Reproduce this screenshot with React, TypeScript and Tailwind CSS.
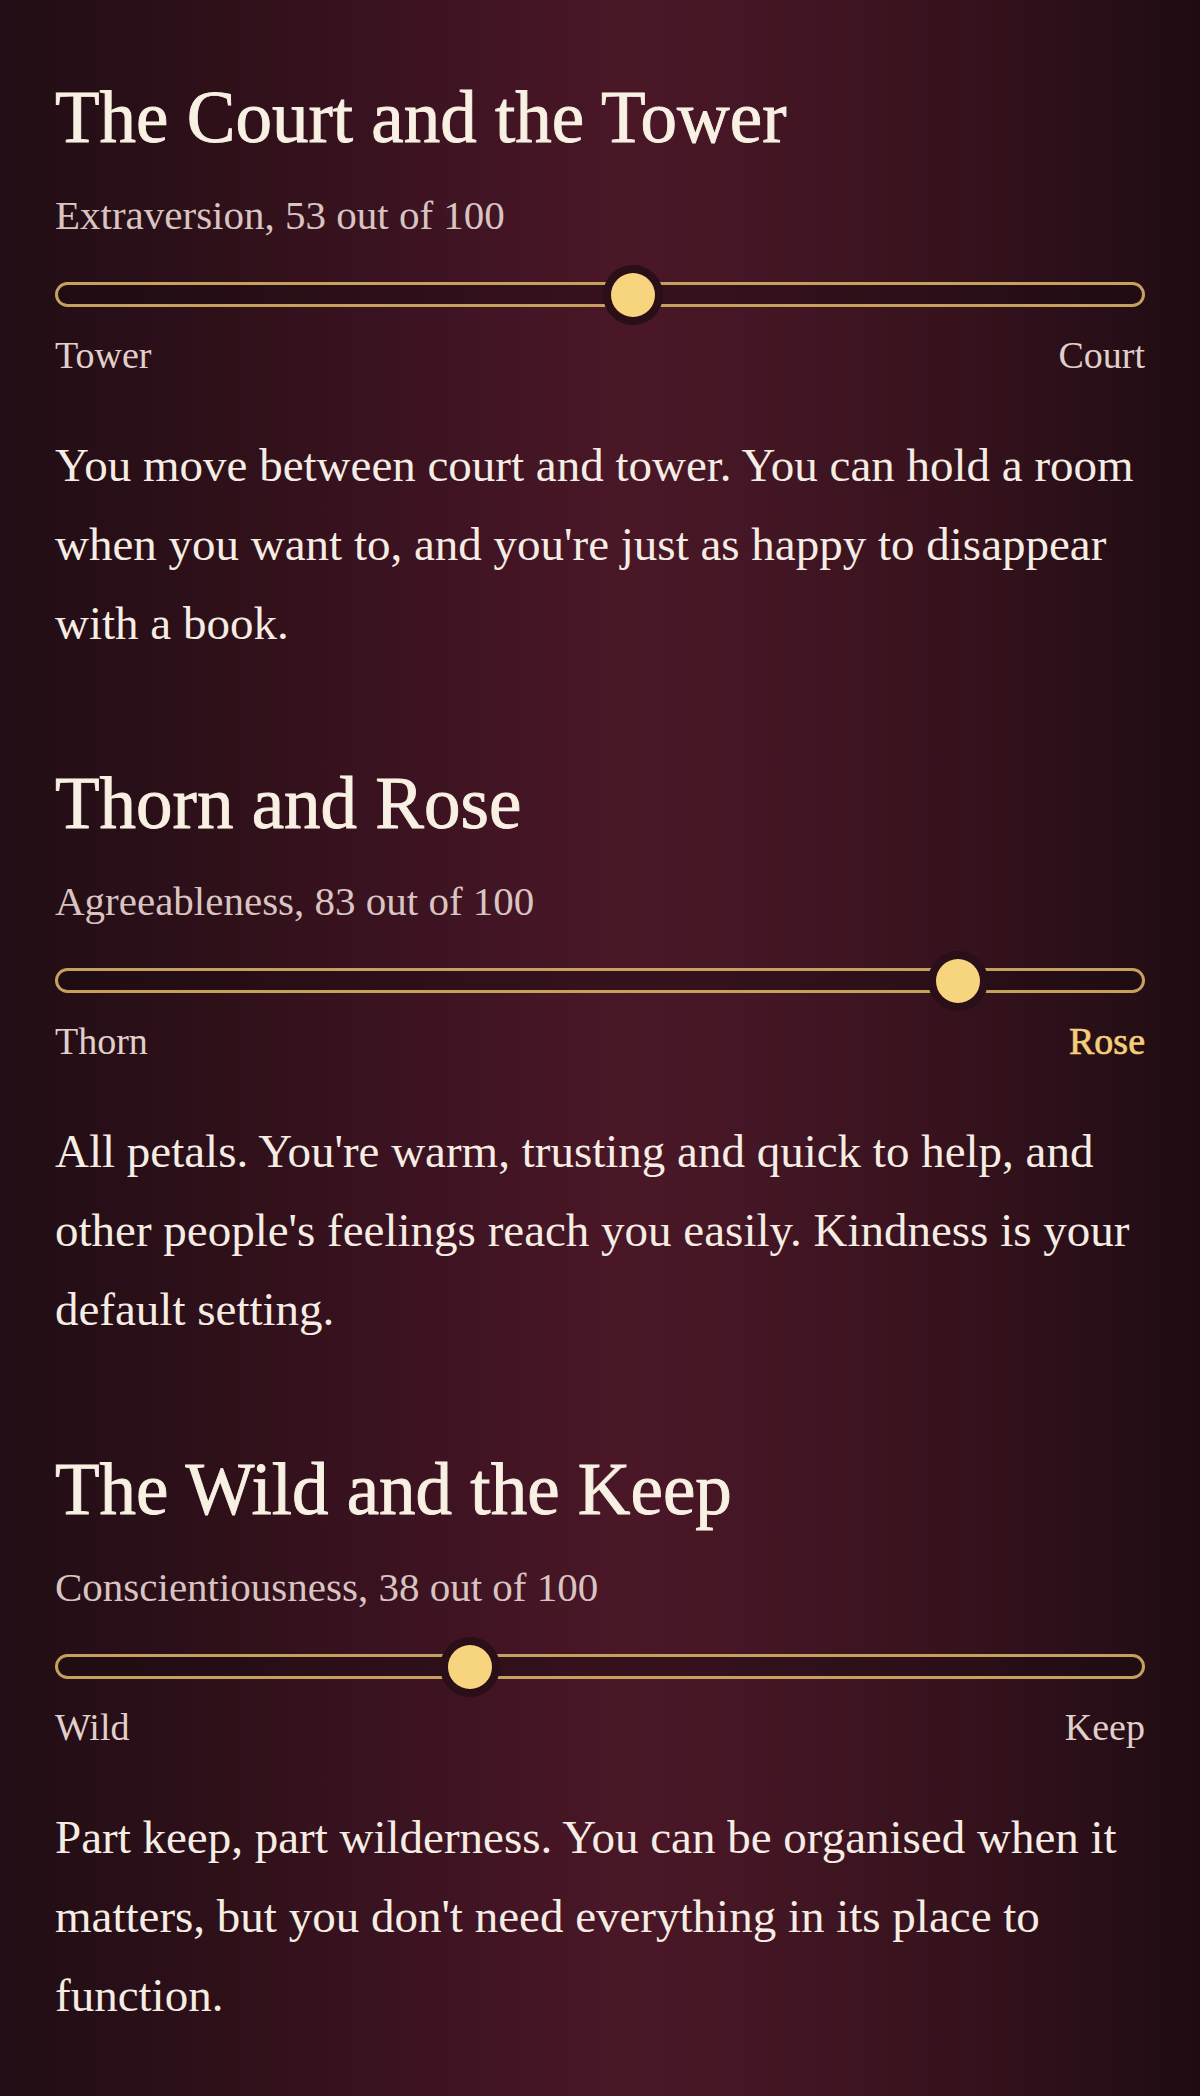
const traits = [
  {
    title: 'The Court and the Tower',
    trait: 'Extraversion',
    score: 53,
    low: 'Tower',
    high: 'Court',
    text: "You move between court and tower. You can hold a room when you want to, and you're just as happy to disappear with a book.",
  },
  {
    title: 'Thorn and Rose',
    trait: 'Agreeableness',
    score: 83,
    low: 'Thorn',
    high: 'Rose',
    text: "All petals. You're warm, trusting and quick to help, and other people's feelings reach you easily. Kindness is your default setting.",
  },
  {
    title: 'The Wild and the Keep',
    trait: 'Conscientiousness',
    score: 38,
    low: 'Wild',
    high: 'Keep',
    text: "Part keep, part wilderness. You can be organised when it matters, but you don't need everything in its place to function.",
  },
]

function Pole({ label, active }: { label: string; active: boolean }) {
  return (
    <span
      className={
        active
          ? 'text-[#f2cf78] [-webkit-text-stroke:0.7px_#f2cf78]'
          : 'text-[#e2cfca]'
      }
    >
      {label}
    </span>
  )
}

export default function App() {
  return (
    <main
      className="min-h-[2096px] w-full px-[55px] pt-[75px] pb-[56px] bg-[linear-gradient(90deg,#210d15_0%,#2e1019_18%,#3d1321_35%,#4a1727_52%,#451625_62%,#36121d_80%,#1f0c13_100%)]"
      style={{ fontFamily: '"Liberation Serif", "Times New Roman", serif' }}
    >
      <div className="flex flex-col gap-[98px]">
        {traits.map(t => (
          <section key={t.title} className="flex flex-col">
            <h2 className="text-[73px] leading-[86px] text-[#f8f0e3] [-webkit-text-stroke:0.9px_#f8f0e3]">
              {t.title}
            </h2>
            <p className="mt-[24px] text-[41px] leading-[60px] text-[#d9c4c1]">
              {t.trait}, {t.score} out of 100
            </p>

            <div className="relative mt-[37px] h-[25px] rounded-full border-[3px] border-[#c6a15e] bg-[#1a0910]/40">
              <div
                className="absolute top-1/2 h-[44px] w-[44px] -translate-x-1/2 -translate-y-1/2 rounded-full bg-[#f6d57e] shadow-[0_0_0_8px_#2a0e18]"
                style={{ left: `${t.score}%` }}
              />
            </div>

            <div className="mt-[20px] flex justify-between text-[38px] leading-[57px]">
              <Pole label={t.low} active={t.score <= 30} />
              <Pole label={t.high} active={t.score >= 70} />
            </div>

            <p className="mt-[42px] text-[47px] leading-[79px] text-[#f5ede3]">{t.text}</p>
          </section>
        ))}
      </div>
    </main>
  )
}
